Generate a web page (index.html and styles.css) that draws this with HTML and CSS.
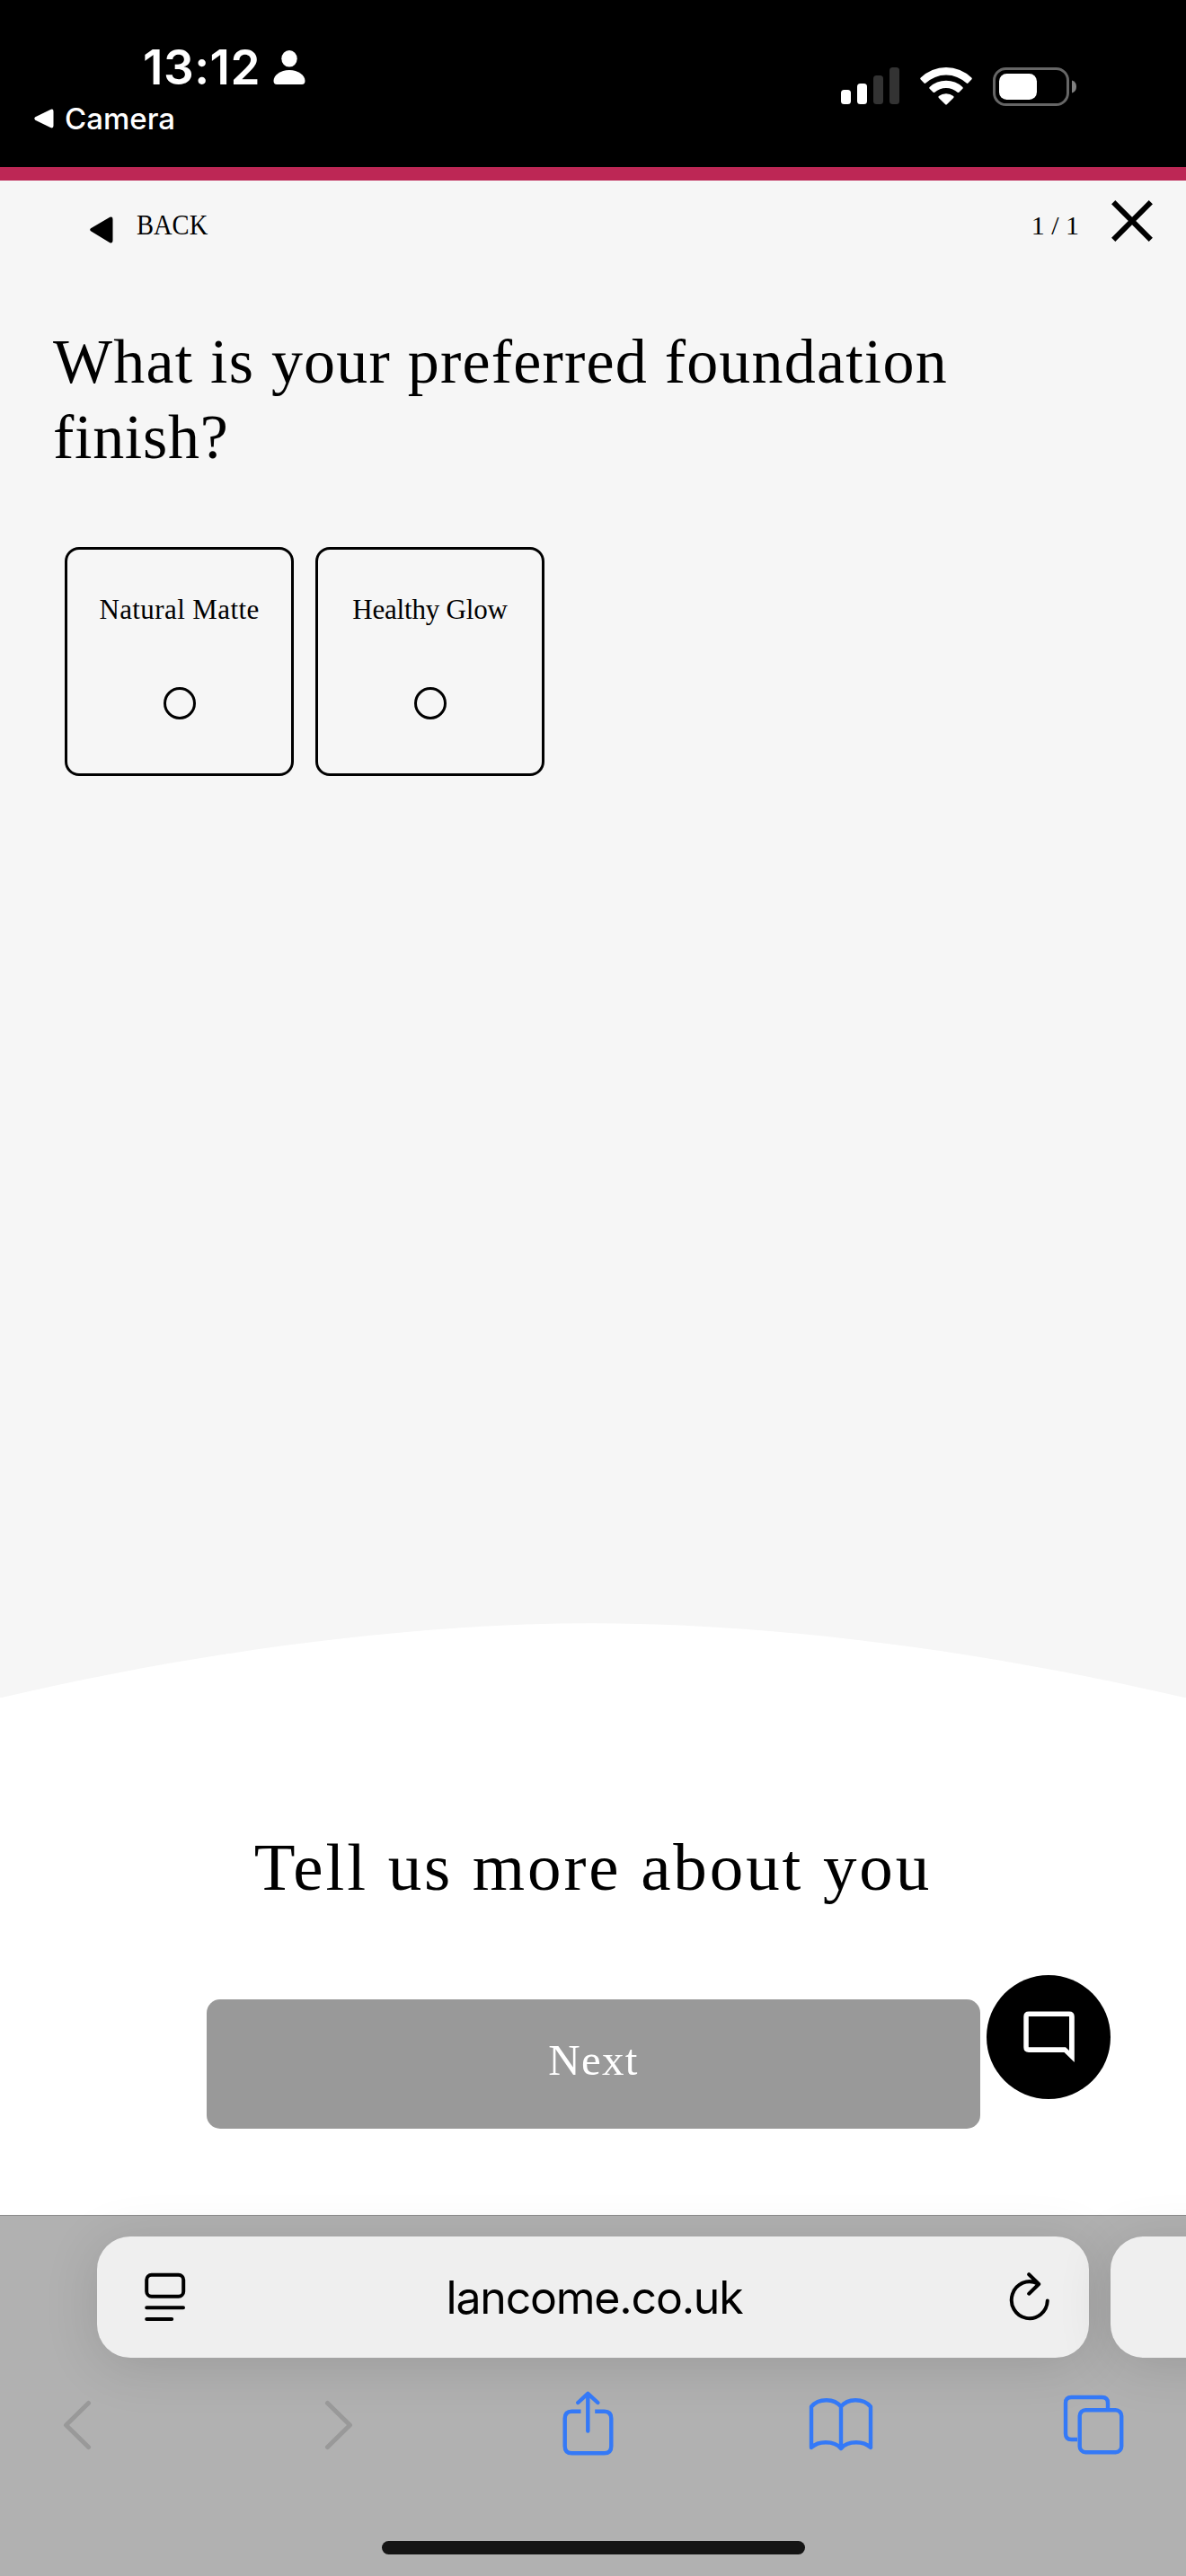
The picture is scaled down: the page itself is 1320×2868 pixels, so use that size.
FILE: index.html
```html
<!DOCTYPE html>
<html lang="en">
<head>
<meta charset="utf-8">
<title>Foundation finish</title>
<link rel="stylesheet" href="styles.css">
</head>
<body>
<div class="screen">
  <header class="status">
    <div class="status-left">
      <div class="clock">
        <span class="time">13:12</span>
        <svg class="person" width="36" height="38" viewBox="0 0 36 38" fill="#fff"><ellipse cx="18" cy="9.3" rx="8.7" ry="9.3"/><path d="M0.5 34C0.5 28 8 22 18 22s17.500 6 17.500 12c0 2.500-1.200 4-3.500 4H4C1.700 38 .5 36.500.5 34z"/></svg>
      </div>
      <div class="return">
        <svg width="22" height="22" viewBox="0 0 22 22" fill="#fff"><path d="M1.300 9.300 18.200.9Q21.500-.4 21.500 3v16q0 3.400-3.300 2.100L1.300 12.700q-2-1.700 0-3.400z"/></svg>
        <span>Camera</span>
      </div>
    </div>
    <div class="status-right">
      <svg width="65" height="42" viewBox="0 0 65 42"><g fill="#fff"><rect y="25" width="11" height="16" rx="3.500"/><rect x="18" y="18" width="11" height="23" rx="3.500"/></g><g fill="#333"><rect x="36" y="9" width="11" height="32" rx="3.500"/><rect x="54" width="11" height="41" rx="3.500"/></g></svg>
      <svg width="58" height="43" viewBox="0 0 58 43" fill="#fff"><path d="M.7 13.600Q-.3 12.600.7 11.600A40.500 40.500 0 0 1 57.300 11.600Q58.300 12.600 57.300 13.600L53.500 17.600Q52.600 18.400 51.700 17.600A33 33 0 0 0 6.300 17.600Q5.400 18.400 4.500 17.600z"/><path d="M10.600 23.700Q9.700 22.800 10.600 21.900A27 27 0 0 1 47.400 21.900Q48.300 22.800 47.400 23.700L43.400 27.700Q42.500 28.500 41.600 27.700A19 19 0 0 0 16.400 27.700Q15.500 28.500 14.600 27.700z"/><path d="M20.800 33.900Q19.900 33 20.800 32.100A13 13 0 0 1 37.200 32.100Q38.100 33 37.200 33.900L29.800 41.300Q29 42.100 28.200 41.300z"/></svg>
      <svg width="94" height="44" viewBox="0 0 94 44"><rect x="1.500" y="1.500" width="82" height="40" rx="13" fill="none" stroke="#666" stroke-width="3"/><rect x="7" y="7" width="42" height="29" rx="8.500" fill="#fff"/><path d="M88 14.500q5 1.500 5 7t-5 7z" fill="#808080"/></svg>
    </div>
  </header>
  <div class="progress"></div>
  <main class="quiz">
    <nav class="quiz-nav">
      <a class="back">
        <svg width="26" height="30" viewBox="0 0 26 30"><path d="M1 13.200 22.300.8Q25.500-.3 25.500 3v24q0 3.300-3.200 2.200L1 16.200q-1.600-1.500 0-3z"/></svg>
        <span class="back-text">BACK</span>
      </a>
      <div class="nav-right">
        <span class="count">1 / 1</span>
        <svg class="close" width="46" height="46" viewBox="0 0 46 46" stroke="#000" stroke-width="6"><path d="M2.200 2.200 43.800 43.800M43.800 2.200 2.200 43.800"/></svg>
      </div>
    </nav>
    <h1 class="question">What is your preferred foundation<br><span class="question-end">finish?</span></h1>
    <div class="options">
      <label class="option"><span class="option-label">Natural Matte</span><span class="radio"></span></label>
      <label class="option"><span class="option-label glow">Healthy Glow</span><span class="radio"></span></label>
    </div>
  </main>
  <svg class="curve" width="1320" height="84" viewBox="0 0 1320 84"><path fill="#fff" d="M0 84V83.500C220 32 455 .3 660 .3S1100 32 1320 83.500V84z"/></svg>
  <section class="more">
    <h2 class="more-title">Tell us more about you</h2>
    <div class="actions">
      <button class="next">Next</button>
      <div class="chat">
        <svg width="58" height="58" viewBox="0 0 58 58"><path fill="#fff" fill-rule="evenodd" d="M6 .5H51q5.800 0 5.800 5.800V57L45.500 46H6Q.3 46 .3 40.300V6.300Q.3.5 6 .5zM5.800 6V40.200H47l4 3.800V6z"/></svg>
      </div>
    </div>
  </section>
  <footer class="browser">
    <div class="tabs">
      <div class="address">
        <svg width="46" height="56" viewBox="0 0 46 56" fill="none" stroke="#000" stroke-width="4" stroke-linecap="round"><rect x="2.200" y="2.700" width="41" height="24" rx="5.500"/><path d="M2.200 39.300H43M2.200 52H30.200"/></svg>
        <span class="host">lancome.co.uk</span>
        <svg width="46" height="56" viewBox="0 0 46 56" fill="none" stroke="#000" stroke-width="4" stroke-linecap="round" stroke-linejoin="round"><path d="M42.800 31.500A20 20.500 0 1 1 32 12.500M22.200 2.200 33.200 13 22.200 23.700"/></svg>
      </div>
      <div class="address peek"></div>
    </div>
    <div class="toolbar">
      <svg class="prev" width="32" height="56" viewBox="0 0 32 56" fill="none" stroke="#999" stroke-width="5" stroke-linecap="round" stroke-linejoin="round"><path d="M28.500 3.500 3.500 28 28.500 52.500"/></svg>
      <svg class="forward" width="32" height="56" viewBox="0 0 32 56" fill="none" stroke="#999" stroke-width="5" stroke-linecap="round" stroke-linejoin="round"><path d="M3.500 3.500 28.500 28 3.500 52.500"/></svg>
      <svg class="share" width="58" height="72" viewBox="0 0 58 72" fill="none" stroke="#3479f7" stroke-width="4.400"><path d="M20.500 22.700H10.500Q2.700 22.700 2.700 30.500V61.500Q2.700 69.300 10.500 69.300H46.500Q54.300 69.300 54.300 61.500V30.500Q54.300 22.700 46.500 22.700H36.200"/><path stroke-linecap="round" stroke-linejoin="round" d="M28.300 44.500V3M17.300 13 28.300 2.800 39.300 13"/></svg>
      <svg class="books" width="72" height="60" viewBox="0 0 72 60" fill="none" stroke="#3479f7" stroke-width="4.400" stroke-linecap="round" stroke-linejoin="round"><path d="M36 10.500Q30.500 3.300 20 3.200 9 3.100 3 10.500V56Q9 50.200 19 50.200 30.500 50.200 36 57 41.500 50.200 53 50.200 63 50.200 69 56V10.500Q63 3.100 52 3.200 41.500 3.300 36 10.500zV57"/></svg>
      <svg class="pages" width="68" height="68" viewBox="0 0 68 68" fill="none" stroke="#3479f7" stroke-width="4.400"><path d="M50 16V9.500Q50 3 43.500 3H9.500Q3 3 3 9.500V43.500Q3 50 9.500 50H16"/><rect x="18.700" y="17.200" width="46.500" height="47" rx="6.500"/></svg>
    </div>
    <div class="home"></div>
  </footer>
</div>
</body>
</html>
```
FILE: styles.css
```css
* { box-sizing: border-box; }
body { margin: 0; }
svg { display: block; flex: none; }

.screen {
  width: 1320px;
  height: 2868px;
  display: flex;
  flex-direction: column;
  overflow: hidden;
  background: #f6f6f6;
  color: #000;
  font-family: "Liberation Serif", serif;
}

.status {
  height: 186px;
  flex: none;
  display: flex;
  justify-content: space-between;
  background: #000;
  color: #fff;
  font-family: Inter, sans-serif;
}
.status-left { padding: 45px 0 0 38px; }
.clock { display: flex; align-items: flex-start; padding-left: 121px; }
.time { width: 145px; line-height: 60px; font-size: 53px; font-weight: 600; letter-spacing: 0.5px; white-space: nowrap; }
.person { margin-top: 11px; }
.return { display: flex; align-items: center; gap: 12px; margin-top: 7px; line-height: 40px; font-size: 33px; font-weight: 500; }
.status-right { display: flex; align-items: flex-start; gap: 23px; padding: 75px 121px 0 0; }

.progress { height: 15px; flex: none; background: #bd2755; }

.quiz { height: 1606px; flex: none; }
.quiz-nav { height: 160px; display: flex; justify-content: space-between; padding: 22px 37px 0 100px; font-size: 31px; line-height: 36px; }
.back { display: flex; align-items: flex-start; gap: 26px; padding-top: 10px; }
.back svg { margin-top: 8px; }
.back-text { transform: scaleX(0.92); transform-origin: 0 50%; }
.nav-right { display: flex; align-items: flex-start; gap: 36px; }
.count { padding-top: 10px; font-size: 30px; }

.question { margin: 0; padding-left: 59px; font-size: 70px; line-height: 84px; font-weight: 400; letter-spacing: 1.2px; white-space: nowrap; }
.question-end { letter-spacing: 0.7px; }

.options { display: flex; gap: 24px; padding: 80px 0 0 72px; }
.option { width: 255px; height: 255px; display: flex; flex-direction: column; align-items: center; gap: 68px; padding-top: 49px; border: 3px solid #000; border-radius: 16px; }
.option-label { font-size: 31px; line-height: 36px; letter-spacing: 0.4px; white-space: nowrap; }
.option-label.glow { letter-spacing: -0.2px; }
.radio { width: 36px; height: 36px; border: 3px solid #000; border-radius: 50%; }

.curve { margin-bottom: -1px; }

.more { height: 576px; flex: none; padding-top: 144px; background: #fff; }
.more-title { margin: 0; font-size: 75px; line-height: 90px; font-weight: 400; letter-spacing: 2.9px; text-align: center; }
.actions { display: flex; align-items: flex-start; gap: 7px; padding: 75px 0 0 230px; }
.next { width: 861px; height: 144px; margin-top: 27px; padding: 0 0 9px; border: 0; border-radius: 15px; background: #999; color: #fff; font: 49px "Liberation Serif", serif; letter-spacing: 1.3px; }
.chat { width: 138px; height: 138px; display: flex; padding: 40px 0 0 41px; border-radius: 50%; background: #000; }

.browser { height: 402px; flex: none; display: flex; flex-direction: column; align-items: center; border-top: 1px solid #8b8b8b; background: #b1b1b1; }
.tabs { align-self: stretch; display: flex; gap: 24px; padding: 23px 0 0 108px; }
.address { width: 1104px; height: 135px; flex: none; display: flex; align-items: center; justify-content: space-between; padding: 0 43px 0 53px; border-radius: 37px; background: #efefef; box-shadow: 0 8px 60px rgba(0, 0, 0, 0.13); font: 50px Inter, sans-serif; }
/* the host is centred on the screen, a little left of the gap between the icons */
.host { padding-right: 7px; letter-spacing: -1.2px; }
.toolbar { align-self: stretch; height: 72px; display: flex; align-items: flex-start; margin-top: 37px; padding-left: 70px; }
.prev, .forward { margin-top: 10px; }
.forward { margin-left: 259px; }
.share { margin-left: 233px; }
.books { margin: 7px 0 0 216px; }
.pages { margin: 4px 0 0 211px; }
.home { width: 471px; height: 15px; margin-top: 95px; border-radius: 8px; background: #151515; }
```
